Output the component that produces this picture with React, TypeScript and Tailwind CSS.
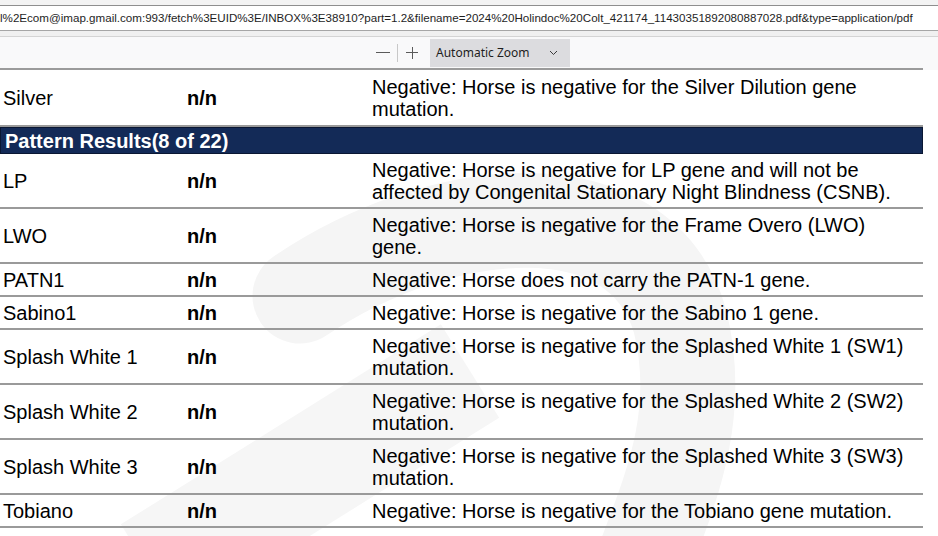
import React from "react";

interface Row {
  name: string;
  result: string;
  desc: string[];
}

const silver: Row = {
  name: "Silver",
  result: "n/n",
  desc: ["Negative: Horse is negative for the Silver Dilution gene", "mutation."],
};

const rows: Row[] = [
  {
    name: "LP",
    result: "n/n",
    desc: [
      "Negative: Horse is negative for LP gene and will not be",
      "affected by Congenital Stationary Night Blindness (CSNB).",
    ],
  },
  {
    name: "LWO",
    result: "n/n",
    desc: ["Negative: Horse is negative for the Frame Overo (LWO)", "gene."],
  },
  { name: "PATN1", result: "n/n", desc: ["Negative: Horse does not carry the PATN-1 gene."] },
  { name: "Sabino1", result: "n/n", desc: ["Negative: Horse is negative for the Sabino 1 gene."] },
  {
    name: "Splash White 1",
    result: "n/n",
    desc: ["Negative: Horse is negative for the Splashed White 1 (SW1)", "mutation."],
  },
  {
    name: "Splash White 2",
    result: "n/n",
    desc: ["Negative: Horse is negative for the Splashed White 2 (SW2)", "mutation."],
  },
  {
    name: "Splash White 3",
    result: "n/n",
    desc: ["Negative: Horse is negative for the Splashed White 3 (SW3)", "mutation."],
  },
  {
    name: "Tobiano",
    result: "n/n",
    desc: ["Negative: Horse is negative for the Tobiano gene mutation."],
  },
];

const url =
  "l%2Ecom@imap.gmail.com:993/fetch%3EUID%3E/INBOX%3E38910?part=1.2&filename=2024%20Holindoc%20Colt_421174_11430351892080887028.pdf&type=application/pdf";

function ResultRow({ row, last }: { row: Row; last?: boolean }) {
  return (
    <div
      className={
        "grid grid-cols-[184px_185px_1fr] items-center border-b-2 border-[#9a9a9a] pt-[5px] leading-[22px] " +
        (last ? "pb-[4px]" : "pb-[4px]")
      }
    >
      <div className="pl-[3px]">{row.name}</div>
      <div className="pl-[3px] font-bold">{row.result}</div>
      <div className="pl-[3px]">
        {row.desc.map((line, i) => (
          <div key={i} className="whitespace-nowrap">
            {line}
          </div>
        ))}
      </div>
    </div>
  );
}

export default function App() {
  return (
    <div className="w-[938px] h-[536px] overflow-hidden bg-white">
      {/* browser chrome */}
      <div className="h-[6px] bg-[#f3f3f3] border-b border-[#8e8e8e]" />
      <div className="h-[25px] bg-white border-b border-[#a6a6a6] flex items-center overflow-hidden">
        <span
          className="whitespace-nowrap text-[11.6px] text-[#1e1e1e]"
          style={{ fontFamily: '"Liberation Sans", Arial, sans-serif' }}
        >
          {url}
        </span>
      </div>
      <div className="h-[6px] bg-[#f0f0f0] border-b border-[#d4d4d4]" />
      <div className="h-[31px] bg-[#f9f9fa] flex items-center">
        <div className="ml-[376px] flex items-center">
          <div className="w-[14px] h-[1px] bg-[#5a5a5a]" />
          <div className="ml-[7px] w-[1px] h-[18px] bg-[#c8c8c8]" />
          <div className="ml-[8px] relative w-[12px] h-[12px]">
            <div className="absolute left-0 top-[5.5px] w-[12px] h-[1px] bg-[#5a5a5a]" />
            <div className="absolute top-0 left-[5.5px] w-[1px] h-[12px] bg-[#5a5a5a]" />
          </div>
          <div
            className="ml-[12px] w-[140px] h-[28px] bg-[#dcdcdf] flex items-center justify-between pl-[6px] pr-[12px] text-[12px] text-[#1e1e1e]"
            style={{ fontFamily: '"Noto Sans", "Open Sans", sans-serif' }}
          >
            <span>Automatic Zoom</span>
            <svg width="9" height="6" viewBox="0 0 9 6" fill="none">
              <path d="M1 1 L4.5 4.5 L8 1" stroke="#3a3a3a" strokeWidth="1" />
            </svg>
          </div>
        </div>
      </div>
      <div className="flex h-[2px]">
        <div className="w-[923px] bg-[#9b9b9b]" />
        <div className="flex-1 bg-[#f9f9fa]" />
      </div>

      {/* pdf page */}
      <div
        className="relative mt-[1px] w-[923px] text-[20px] text-black"
        style={{ fontFamily: '"Liberation Sans", Arial, sans-serif' }}
      >
        <svg
          className="absolute left-0 top-0 w-[923px] h-[470px]"
          viewBox="0 0 923 470"
          fill="none"
        >
          <path
            d="M300 225 C 440 130, 640 110, 680 250 C 705 350, 665 430, 640 500"
            stroke="#f5f5f5"
            strokeWidth="95"
            strokeLinecap="round"
          />
          <path d="M150 500 L 470 300" stroke="#f6f6f6" strokeWidth="110" />
        </svg>
        <div className="relative">
          <div className="grid grid-cols-[184px_185px_1fr] items-center border-b-2 border-[#9a9a9a] pt-[5px] pb-[5px] leading-[22px]">
            <div className="pl-[3px]">{silver.name}</div>
            <div className="pl-[3px] font-bold">{silver.result}</div>
            <div className="pl-[3px]">
              {silver.desc.map((line, i) => (
                <div key={i} className="whitespace-nowrap">
                  {line}
                </div>
              ))}
            </div>
          </div>
          <div className="h-[27px] bg-[#132a57] border border-[#0a1733] flex items-center pl-[4px] text-white font-bold leading-[22px]">
            Pattern Results(8 of 22)
          </div>
          {rows.map((r, i) => (
            <ResultRow key={r.name} row={r} last={i === rows.length - 1} />
          ))}
        </div>
      </div>
    </div>
  );
}
